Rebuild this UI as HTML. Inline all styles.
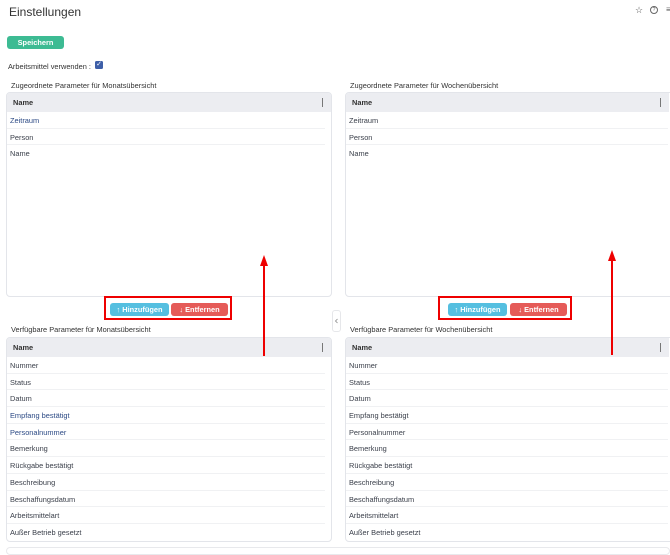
<!DOCTYPE html>
<html><head><meta charset="utf-8"><style>
*{box-sizing:border-box;margin:0;padding:0}
body{width:670px;height:553px;overflow:hidden;background:#fff;font-family:"Liberation Sans",sans-serif;color:#3a3f4a;position:relative}
.a{position:absolute}
.title{left:9px;top:5px;font-size:12px;color:#333}
.save{left:7px;top:36px;width:57px;height:13px;background:#3dbb93;border-radius:3px;color:#fff;font-size:7.4px;font-weight:bold;text-align:center;line-height:13px}
.lbl{font-size:7.4px;color:#333}
.cb{left:95px;top:61px;width:8px;height:8px;background:#3e5fa8;border-radius:1.5px;color:#fff;font-size:7px;line-height:8px;text-align:center}
.panel{border:1px solid #e3e5ea;border-radius:4px;background:#fff;overflow:hidden}
.hd{height:19px;background:#ecedf1;font-size:7.4px;font-weight:bold;line-height:19px;padding-left:6px;color:#333;position:relative}
.hd:after{content:"";position:absolute;right:8px;top:5px;width:1px;height:9px;background:#777}
.row{height:16.7px;line-height:17.5px;font-size:7.4px;padding-left:3px;border-bottom:1px solid #f0f1f3;margin-right:6px}
.row.nb{border-bottom:none}
.blue{color:#2c4a85}
.btnbox{border:2px solid #e00;height:24px}
.b{position:absolute;top:5px;height:13px;border-radius:3px;color:#fff;font-size:7.4px;font-weight:bold;line-height:13px;text-align:center}
.hz{background:#55bfe0}
.ef{background:#e55b58}
.arrow{width:2px;background:#e00}
.head{width:0;height:0;border-left:4px solid transparent;border-right:4px solid transparent;border-bottom:11px solid #e00}
</style></head><body>
<div class="a title">Einstellungen</div>
<div class="a" style="left:635px;top:5px;font-size:9px;color:#555">☆</div>
<div class="a" style="left:650px;top:6px;width:8px;height:8px;border:1px solid #666;border-radius:50%;font-size:5px;text-align:center;line-height:7px;color:#555">?</div>
<div class="a" style="left:666px;top:5px;font-size:8px;color:#555">≡</div>
<div class="a save">Speichern</div>
<div class="a lbl" style="left:8px;top:62px">Arbeitsmittel verwenden :</div>
<div class="a cb">✓</div>

<div class="a lbl" style="left:11px;top:81px">Zugeordnete Parameter für Monatsübersicht</div>
<div class="a panel" style="left:6px;top:92px;width:326px;height:205px">
<div class="hd">Name</div>
<div class="row blue">Zeitraum</div><div class="row">Person</div><div class="row nb">Name</div>
</div>
<div class="a lbl" style="left:350px;top:81px">Zugeordnete Parameter für Wochenübersicht</div>
<div class="a panel" style="left:345px;top:92px;width:330px;height:205px">
<div class="hd" style="margin-right:5px">Name</div>
<div class="row">Zeitraum</div><div class="row">Person</div><div class="row nb">Name</div>
</div>

<div class="a btnbox" style="left:104px;top:296px;width:128px">
<div class="b hz" style="left:4px;width:59px">↑ Hinzufügen</div>
<div class="b ef" style="left:65px;width:57px">↓ Entfernen</div></div>
<div class="a btnbox" style="left:438px;top:296px;width:134px">
<div class="b hz" style="left:8px;width:59px">↑ Hinzufügen</div>
<div class="b ef" style="left:70px;width:57px">↓ Entfernen</div></div>

<div class="a" style="left:332px;top:310px;width:9px;height:22px;border:1px solid #e6e7ea;border-radius:3px"><svg width="7" height="20" viewBox="0 0 7 20" style="position:absolute;left:0;top:0"><path d="M4.5 8 L2.5 10 L4.5 12" fill="none" stroke="#888" stroke-width="0.8"/></svg></div>

<div class="a lbl" style="left:11px;top:325px">Verfügbare Parameter für Monatsübersicht</div>
<div class="a panel" style="left:6px;top:337px;width:326px;height:205px">
<div class="hd">Name</div>
<div class="row">Nummer</div><div class="row">Status</div><div class="row">Datum</div><div class="row blue">Empfang bestätigt</div><div class="row blue">Personalnummer</div><div class="row">Bemerkung</div><div class="row">Rückgabe bestätigt</div><div class="row">Beschreibung</div><div class="row">Beschaffungsdatum</div><div class="row">Arbeitsmittelart</div><div class="row nb">Außer Betrieb gesetzt</div>
</div>
<div class="a lbl" style="left:350px;top:325px">Verfügbare Parameter für Wochenübersicht</div>
<div class="a panel" style="left:345px;top:337px;width:330px;height:205px">
<div class="hd" style="margin-right:5px">Name</div>
<div class="row">Nummer</div><div class="row">Status</div><div class="row">Datum</div><div class="row">Empfang bestätigt</div><div class="row">Personalnummer</div><div class="row">Bemerkung</div><div class="row">Rückgabe bestätigt</div><div class="row">Beschreibung</div><div class="row">Beschaffungsdatum</div><div class="row">Arbeitsmittelart</div><div class="row nb">Außer Betrieb gesetzt</div>
</div>
<div class="a" style="left:6px;top:547px;width:664px;height:8px;border:1px solid #e8e9ec;border-radius:4px"></div>

<div class="a head" style="left:260px;top:255px"></div>
<div class="a arrow" style="left:263px;top:264px;height:92px"></div>
<div class="a head" style="left:608px;top:250px"></div>
<div class="a arrow" style="left:611px;top:259px;height:96px"></div>
</body></html>
